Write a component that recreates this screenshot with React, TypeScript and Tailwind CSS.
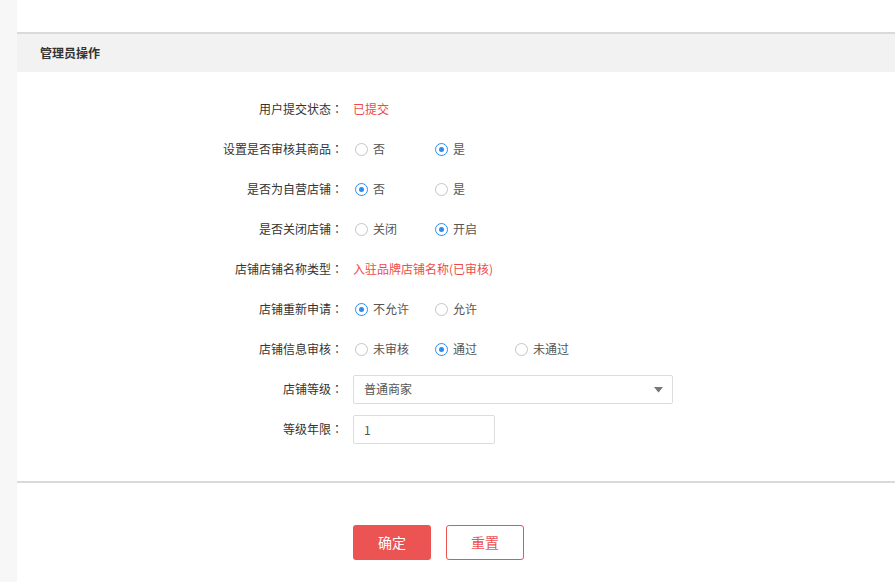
import React, { useState } from 'react'

const FONT = { fontFamily: '"Noto Sans CJK SC", "Noto Sans", sans-serif' }
const COLON = { fontFamily: '"Noto Sans CJK TC", "Noto Sans CJK SC", sans-serif' }

type Opt = { label: string }

function Radio({ checked, label, onClick }: { checked: boolean; label: string; onClick: () => void }) {
  return (
    <button onClick={onClick} className="flex items-center w-[80px] pl-[2px] text-left">
      <span
        className={`w-[13px] h-[13px] rounded-full border flex items-center justify-center shrink-0 ${
          checked ? 'border-[#2d8cf0]' : 'border-[#c4c4c4]'
        }`}
      >
        {checked && <span className="w-[5px] h-[5px] rounded-full bg-[#2d8cf0]" />}
      </span>
      <span className="ml-[5px] text-[#555]">{label}</span>
    </button>
  )
}

function RadioGroup({ options, initial }: { options: Opt[]; initial: number }) {
  const [val, setVal] = useState(initial)
  return (
    <div className="flex items-center">
      {options.map((o, i) => (
        <Radio key={o.label} label={o.label} checked={val === i} onClick={() => setVal(i)} />
      ))}
    </div>
  )
}

function Row({ label, children }: { label: string; children: React.ReactNode }) {
  return (
    <div className="flex items-center h-[40px]">
      <div className="w-[327px] text-right text-[#333] pr-[1px]">
        {label}
        <span style={COLON}>：</span>
      </div>
      <div className="ml-[9px] flex items-center">{children}</div>
    </div>
  )
}

export default function App() {
  const [level, setLevel] = useState('1')

  return (
    <div className="flex min-h-[582px] bg-white text-[12px]" style={FONT}>
      {/* left gutter */}
      <div className="w-[17px] shrink-0 bg-[#f7f7f7]" />

      <div className="flex-1 flex flex-col">
        <div className="h-[32px]" />

        {/* section header */}
        <div className="border-t-2 border-[#dadada] bg-[#f2f2f2] h-[40px] flex items-center pl-[23px]">
          <span className="font-bold text-[#333]">管理员操作</span>
        </div>

        {/* form */}
        <div className="pt-[17px] pb-[32px]">
          <Row label="用户提交状态">
            <span className="text-[#f04a4a]">已提交</span>
          </Row>
          <Row label="设置是否审核其商品">
            <RadioGroup options={[{ label: '否' }, { label: '是' }]} initial={1} />
          </Row>
          <Row label="是否为自营店铺">
            <RadioGroup options={[{ label: '否' }, { label: '是' }]} initial={0} />
          </Row>
          <Row label="是否关闭店铺">
            <RadioGroup options={[{ label: '关闭' }, { label: '开启' }]} initial={1} />
          </Row>
          <Row label="店铺店铺名称类型">
            <span className="text-[#f04a4a]">入驻品牌店铺名称(已审核)</span>
          </Row>
          <Row label="店铺重新申请">
            <RadioGroup options={[{ label: '不允许' }, { label: '允许' }]} initial={0} />
          </Row>
          <Row label="店铺信息审核">
            <RadioGroup options={[{ label: '未审核' }, { label: '通过' }, { label: '未通过' }]} initial={1} />
          </Row>
          <Row label="店铺等级">
            <div className="relative w-[320px] h-[29px] border border-[#dcdcdc] rounded-[2px] flex items-center pl-[10px] text-[#555]">
              普通商家
              <svg className="absolute right-[9px] top-[11px]" width="9" height="6" viewBox="0 0 9 6">
                <path d="M0 0 H9 L4.5 5.5 Z" fill="#777" />
              </svg>
            </div>
          </Row>
          <Row label="等级年限">
            <input
              value={level}
              onChange={e => setLevel(e.target.value)}
              className="w-[142px] h-[29px] border border-[#dcdcdc] rounded-[2px] px-[10px] text-[#555] outline-none"
              style={FONT}
            />
          </Row>
        </div>

        {/* footer */}
        <div className="border-t-2 border-[#dadada] pt-[42px] flex">
          <div className="ml-[336px] flex gap-[15px]">
            <button className="w-[78px] h-[35px] rounded-[3px] bg-[#ec5353] text-white text-[14px]">确定</button>
            <button className="w-[78px] h-[35px] rounded-[3px] border border-[#ec5353] text-[#ec5353] text-[14px] bg-white">
              重置
            </button>
          </div>
        </div>
      </div>
    </div>
  )
}
